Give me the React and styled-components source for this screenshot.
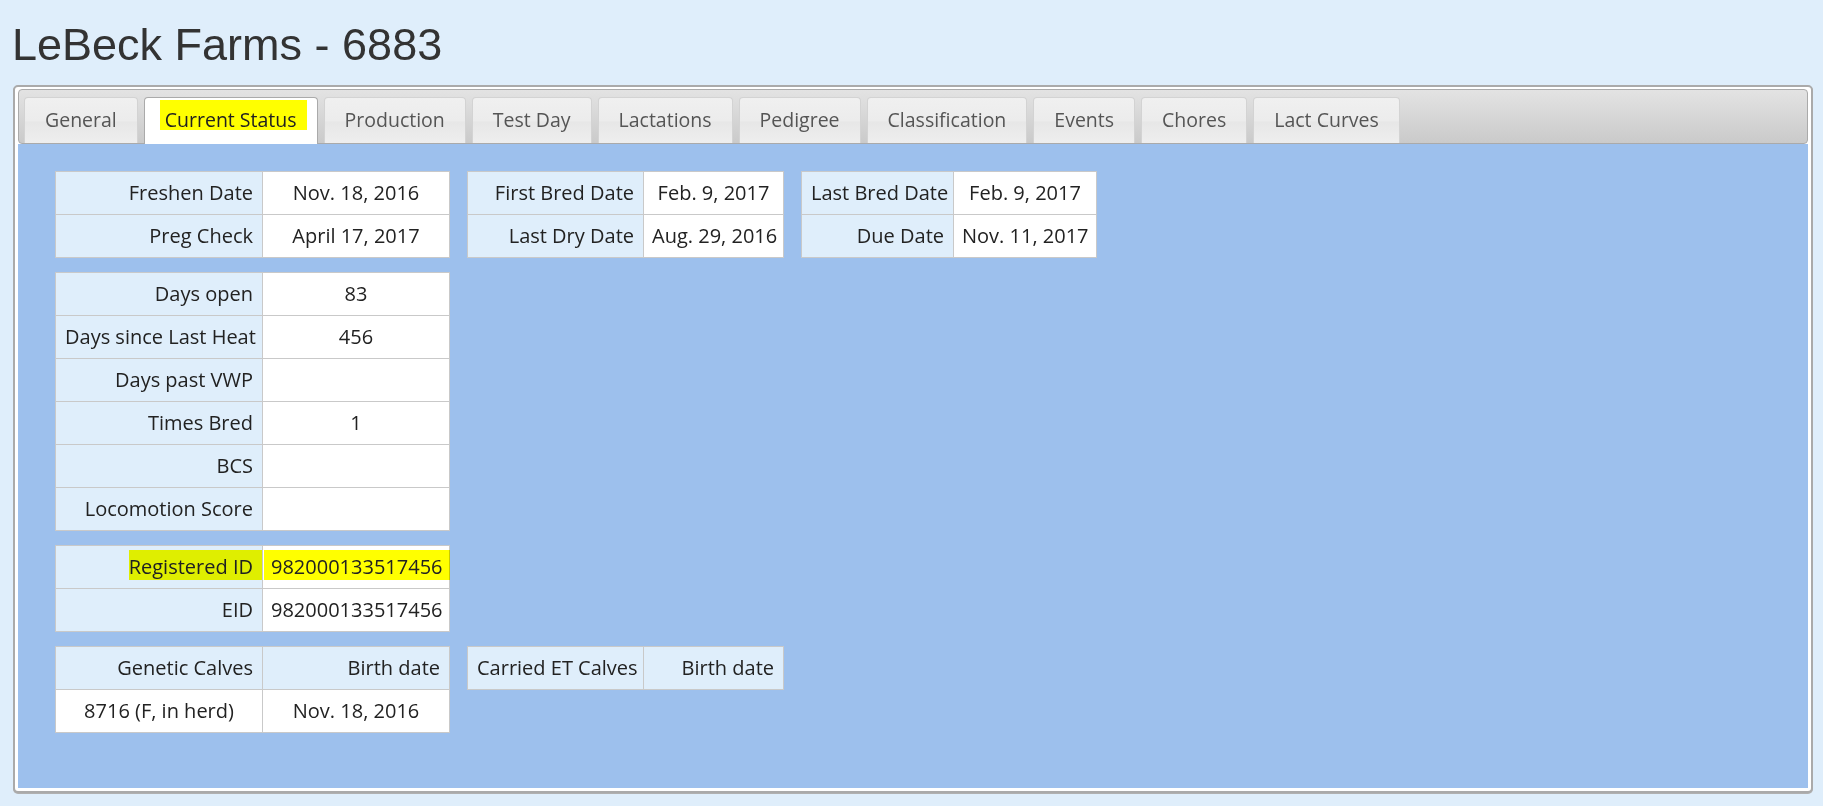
import React from 'react';
import styled, { createGlobalStyle } from 'styled-components';

const Global = createGlobalStyle`
  html, body { margin: 0; padding: 0; background: #dfeefb; }
  body { font-family: "Open Sans", "Liberation Sans", sans-serif; color: #222; }
  * { box-sizing: border-box; }
`;

const Page = styled.div`
  padding: 0 10px 12px 13px;
  min-height: 806px;
`;

const Title = styled.h1`
  margin: 20px 0 15px -1px;
  font-family: "Liberation Sans", Arial, sans-serif;
  font-weight: 400;
  font-size: 45px;
  line-height: 50px;
  color: #333;
`;

const Panel = styled.div`
  border: 2px solid #aaa;
  border-radius: 5px;
  background: #fff;
  padding: 2px 3px 3px;
  box-shadow: 0 1px 0 #b0b0b0;
`;

const TabBar = styled.ul`
  display: flex;
  gap: 6px;
  margin: 0;
  padding: 7px 5px 0;
  list-style: none;
  border: 1px solid #aaa;
  border-radius: 4px;
  background: linear-gradient(#e3e3e3, #cacaca);
`;

const Tab = styled.li`
  border: 1px solid ${(p) => (p.$active ? '#aaa' : '#d3d3d3')};
  border-bottom-width: 0;
  border-radius: 4px 4px 0 0;
  background: ${(p) =>
    p.$active
      ? '#fff'
      : 'linear-gradient(#f0f0f0 0%, #ececec 50%, #e7e7e7 54%, #eeeeee 100%)'};
  padding: 9px 20px ${(p) => (p.$active ? '12px' : '11px')};
  margin-bottom: ${(p) => (p.$active ? '-1px' : '0')};
  font-size: 19.5px;
  line-height: 25px;
  color: ${(p) => (p.$active ? '#212121' : '#555')};
  white-space: nowrap;
  cursor: pointer;
`;

const Marker = styled.span`
  padding: ${(p) => p.$pad};
  margin: ${(p) => p.$margin};
  background: linear-gradient(#ffff00, #ffff00) 0 0 / 100% 30px no-repeat;
  mix-blend-mode: multiply;
`;

const Content = styled.div`
  background: #9dc0ed;
  padding: 27px 37px 55px;
  display: flex;
  flex-direction: column;
  align-items: flex-start;
  gap: 14px;
`;

const Row = styled.div`
  display: flex;
  align-items: flex-start;
  gap: 17px;
`;

const InfoTable = styled.table`
  border-collapse: collapse;
  table-layout: fixed;
  width: ${(p) => p.$w}px;
  font-size: 20px;
  line-height: 26px;
`;

const Label = styled.th`
  width: ${(p) => (p.$w ? `${p.$w}px` : 'auto')};
  border: 1px solid #c9c9c9;
  padding: 8px 9px;
  background: #dfeefb;
  font-weight: 400;
  text-align: right;
  white-space: nowrap;
  color: #222;
`;

const Value = styled.td`
  width: ${(p) => (p.$w ? `${p.$w}px` : 'auto')};
  border: 1px solid #c9c9c9;
  padding: 8px;
  background: #fff;
  text-align: center;
  white-space: nowrap;
  color: #222;
`;

const tabs = [
  'General',
  'Current Status',
  'Production',
  'Test Day',
  'Lactations',
  'Pedigree',
  'Classification',
  'Events',
  'Chores',
  'Lact Curves',
];

function KeyValueTable({ widths, rows }) {
  const [lw, vw] = widths;
  return (
    <InfoTable $w={lw + vw}>
      <tbody>
        {rows.map(([k, v], i) => (
          <tr key={i}>
            <Label $w={i === 0 ? lw : undefined}>{k}</Label>
            <Value $w={i === 0 ? vw : undefined}>{v}</Value>
          </tr>
        ))}
      </tbody>
    </InfoTable>
  );
}

function CalvesTable({ widths, title, calves }) {
  const [lw, vw] = widths;
  return (
    <InfoTable $w={lw + vw}>
      <tbody>
        <tr>
          <Label $w={lw}>{title}</Label>
          <Label $w={vw}>Birth date</Label>
        </tr>
        {calves.map(([id, date]) => (
          <tr key={id}>
            <Value>{id}</Value>
            <Value>{date}</Value>
          </tr>
        ))}
      </tbody>
    </InfoTable>
  );
}

export default function App() {
  return (
    <>
      <Global />
      <Page>
        <Title>LeBeck Farms - 6883</Title>
        <Panel>
          <TabBar>
            {tabs.map((t) => (
              <Tab key={t} $active={t === 'Current Status'}>
                {t === 'Current Status' ? (
                  <Marker $pad="6px 10px 0 5px" $margin="0 -10px 0 -5px">
                    {t}
                  </Marker>
                ) : (
                  t
                )}
              </Tab>
            ))}
          </TabBar>
          <Content>
            <Row>
              <KeyValueTable
                widths={[207, 187]}
                rows={[
                  ['Freshen Date', 'Nov. 18, 2016'],
                  ['Preg Check', 'April 17, 2017'],
                ]}
              />
              <KeyValueTable
                widths={[176, 140]}
                rows={[
                  ['First Bred Date', 'Feb. 9, 2017'],
                  ['Last Dry Date', 'Aug. 29, 2016'],
                ]}
              />
              <KeyValueTable
                widths={[152, 143]}
                rows={[
                  ['Last Bred Date', 'Feb. 9, 2017'],
                  ['Due Date', 'Nov. 11, 2017'],
                ]}
              />
            </Row>
            <KeyValueTable
              widths={[207, 187]}
              rows={[
                ['Days open', '83'],
                ['Days since Last Heat', '456'],
                ['Days past VWP', ''],
                ['Times Bred', '1'],
                ['BCS', ''],
                ['Locomotion Score', ''],
              ]}
            />
            <KeyValueTable
              widths={[207, 187]}
              rows={[
                [
                  <Marker key="l" $pad="3px 9px 0 0" $margin="0 -9px 0 0">
                    Registered ID
                  </Marker>,
                  <Marker key="v" $pad="3px 7px 0" $margin="0 -7px">
                    982000133517456
                  </Marker>,
                ],
                ['EID', '982000133517456'],
              ]}
            />
            <Row>
              <CalvesTable
                widths={[207, 187]}
                title="Genetic Calves"
                calves={[['8716 (F, in herd)', 'Nov. 18, 2016']]}
              />
              <CalvesTable widths={[176, 140]} title="Carried ET Calves" calves={[]} />
            </Row>
          </Content>
        </Panel>
      </Page>
    </>
  );
}
